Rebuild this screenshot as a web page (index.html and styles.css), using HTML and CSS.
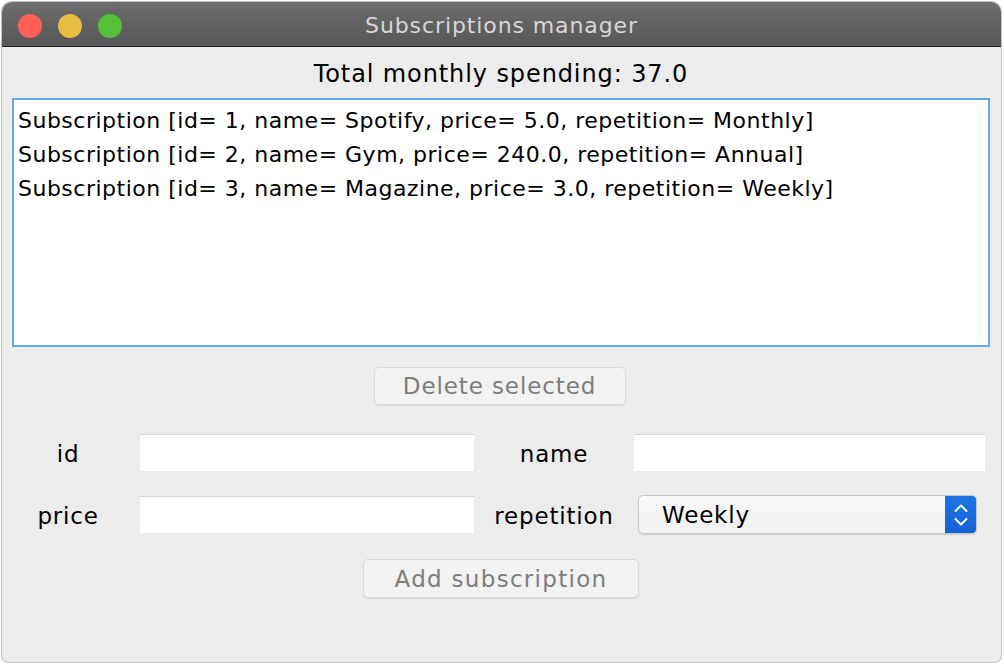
FILE: index.html
```html
<!DOCTYPE html>
<html>
<head>
<meta charset="utf-8">
<link rel="stylesheet" href="styles.css">
</head>
<body>
<div class="window">
  <div class="titlebar">
    <div class="lights">
      <span class="light red"></span>
      <span class="light yellow"></span>
      <span class="light green"></span>
    </div>
    <div class="title">Subscriptions manager</div>
  </div>
  <div class="content">
    <div class="total">Total monthly spending: 37.0</div>
    <div class="list">
      <div class="item">Subscription [id= 1, name= Spotify, price= 5.0, repetition= Monthly]</div>
      <div class="item">Subscription [id= 2, name= Gym, price= 240.0, repetition= Annual]</div>
      <div class="item">Subscription [id= 3, name= Magazine, price= 3.0, repetition= Weekly]</div>
    </div>
    <div class="btnrow delrow"><button class="btn del">Delete selected</button></div>
    <div class="form">
      <div class="label l1">id</div>
      <div class="input"></div>
      <div class="label">name</div>
      <div class="input"></div>
      <div class="label l1">price</div>
      <div class="input"></div>
      <div class="label">repetition</div>
      <div class="select">
        <span class="sel-text">Weekly</span>
        <span class="stepper">
          <svg width="16" height="30" viewBox="0 0 16 30"><path d="M2.5 11 L8 5.5 L13.5 11 M2.5 19 L8 24.5 L13.5 19" fill="none" stroke="#fff" stroke-width="2" stroke-linecap="round" stroke-linejoin="round"/></svg>
        </span>
      </div>
    </div>
    <div class="btnrow addrow"><button class="btn add">Add subscription</button></div>
  </div>
</div>
</body>
</html>
```

FILE: styles.css
```css
html, body {
  margin: 0;
  padding: 0;
  background: #ffffff;
}
body {
  font-family: "DejaVu Sans", "Liberation Sans", sans-serif;
  width: 1004px;
  height: 665px;
  overflow: hidden;
}
.window {
  margin: 2px 0 0 2px;
  width: 999px;
  height: 660px;
  background: #ececec;
  border-radius: 10px 10px 6px 6px;
  overflow: hidden;
  box-shadow: 0 0 0 1px #c4c4c4;
  display: flex;
  flex-direction: column;
}
.titlebar {
  height: 44px;
  background: linear-gradient(#6e6e6e, #565656);
  border-bottom: 1px solid #1e1e1e;
  display: flex;
  align-items: center;
  justify-content: center;
  position: relative;
  flex: none;
}
.lights {
  position: absolute;
  left: 16px;
  top: 12px;
  display: flex;
  gap: 16px;
}
.light {
  width: 24px;
  height: 24px;
  border-radius: 50%;
  display: block;
}
.red { background: #fe5f57; }
.yellow { background: #e6bd3e; }
.green { background: #55bf39; }
.title {
  color: #d6d6d6;
  font-size: 22px;
  letter-spacing: 0.9px;
  padding-top: 3px;
}
.content {
  padding: 0 11px 0 10px;
  display: flex;
  flex-direction: column;
}
.total {
  text-align: center;
  font-size: 24px;
  letter-spacing: 0.9px;
  color: #000;
  height: 28px;
  line-height: 28px;
  margin-top: 13px;
  margin-bottom: 10px;
}
.list {
  height: 249px;
  box-sizing: border-box;
  background: #fff;
  border: 2px solid #62aaee;
  padding: 4px 4px;
}
.item {
  font-size: 22px;
  letter-spacing: 0.5px;
  height: 34px;
  line-height: 34px;
  color: #000;
  white-space: nowrap;
}
.btnrow {
  display: flex;
  justify-content: center;
}
.delrow {
  margin-top: 20px;
  margin-right: 3px;
}
.btn {
  font-family: inherit;
  font-size: 23px;
  letter-spacing: 0.9px;
  color: #7e7e7e;
  background: #f2f2f2;
  border: 1px solid #d8d8d8;
  border-radius: 5px;
  box-shadow: 0 1px 1px rgba(0,0,0,0.08);
  padding: 0;
  height: 38px;
}
.del { width: 252px; }
.add { width: 276px; height: 39px; letter-spacing: 1.3px; }
.form {
  margin-top: 29px;
  display: grid;
  grid-template-columns: 128px 334px 160px 351px;
  grid-auto-rows: 37px;
  row-gap: 25px;
  align-items: center;
}
.label {
  font-size: 23px;
  letter-spacing: 0.8px;
  color: #000;
  text-align: center;
  line-height: 37px;
  padding-top: 3px;
}
.l1 {
  padding-right: 16px;
}
.input {
  height: 37px;
  background: #fff;
  border-top: 1px solid #d6d6d6;
  box-sizing: border-box;
}
.select {
  margin: 0 8px 0 4px;
  height: 39px;
  box-sizing: border-box;
  border: 1px solid #c6c6c6;
  border-radius: 5px;
  background: linear-gradient(#fafafa, #f1f1f1);
  box-shadow: 0 1px 1px rgba(0,0,0,0.12);
  display: flex;
  align-items: center;
  overflow: hidden;
}
.sel-text {
  flex: 1;
  font-size: 23px;
  letter-spacing: 0.8px;
  color: #000;
  padding-left: 23px;
}
.stepper {
  width: 31px;
  height: 100%;
  background: linear-gradient(#1d74e6, #1561d6);
  display: flex;
  align-items: center;
  justify-content: center;
}
.addrow {
  margin-top: 26px;
}
```
